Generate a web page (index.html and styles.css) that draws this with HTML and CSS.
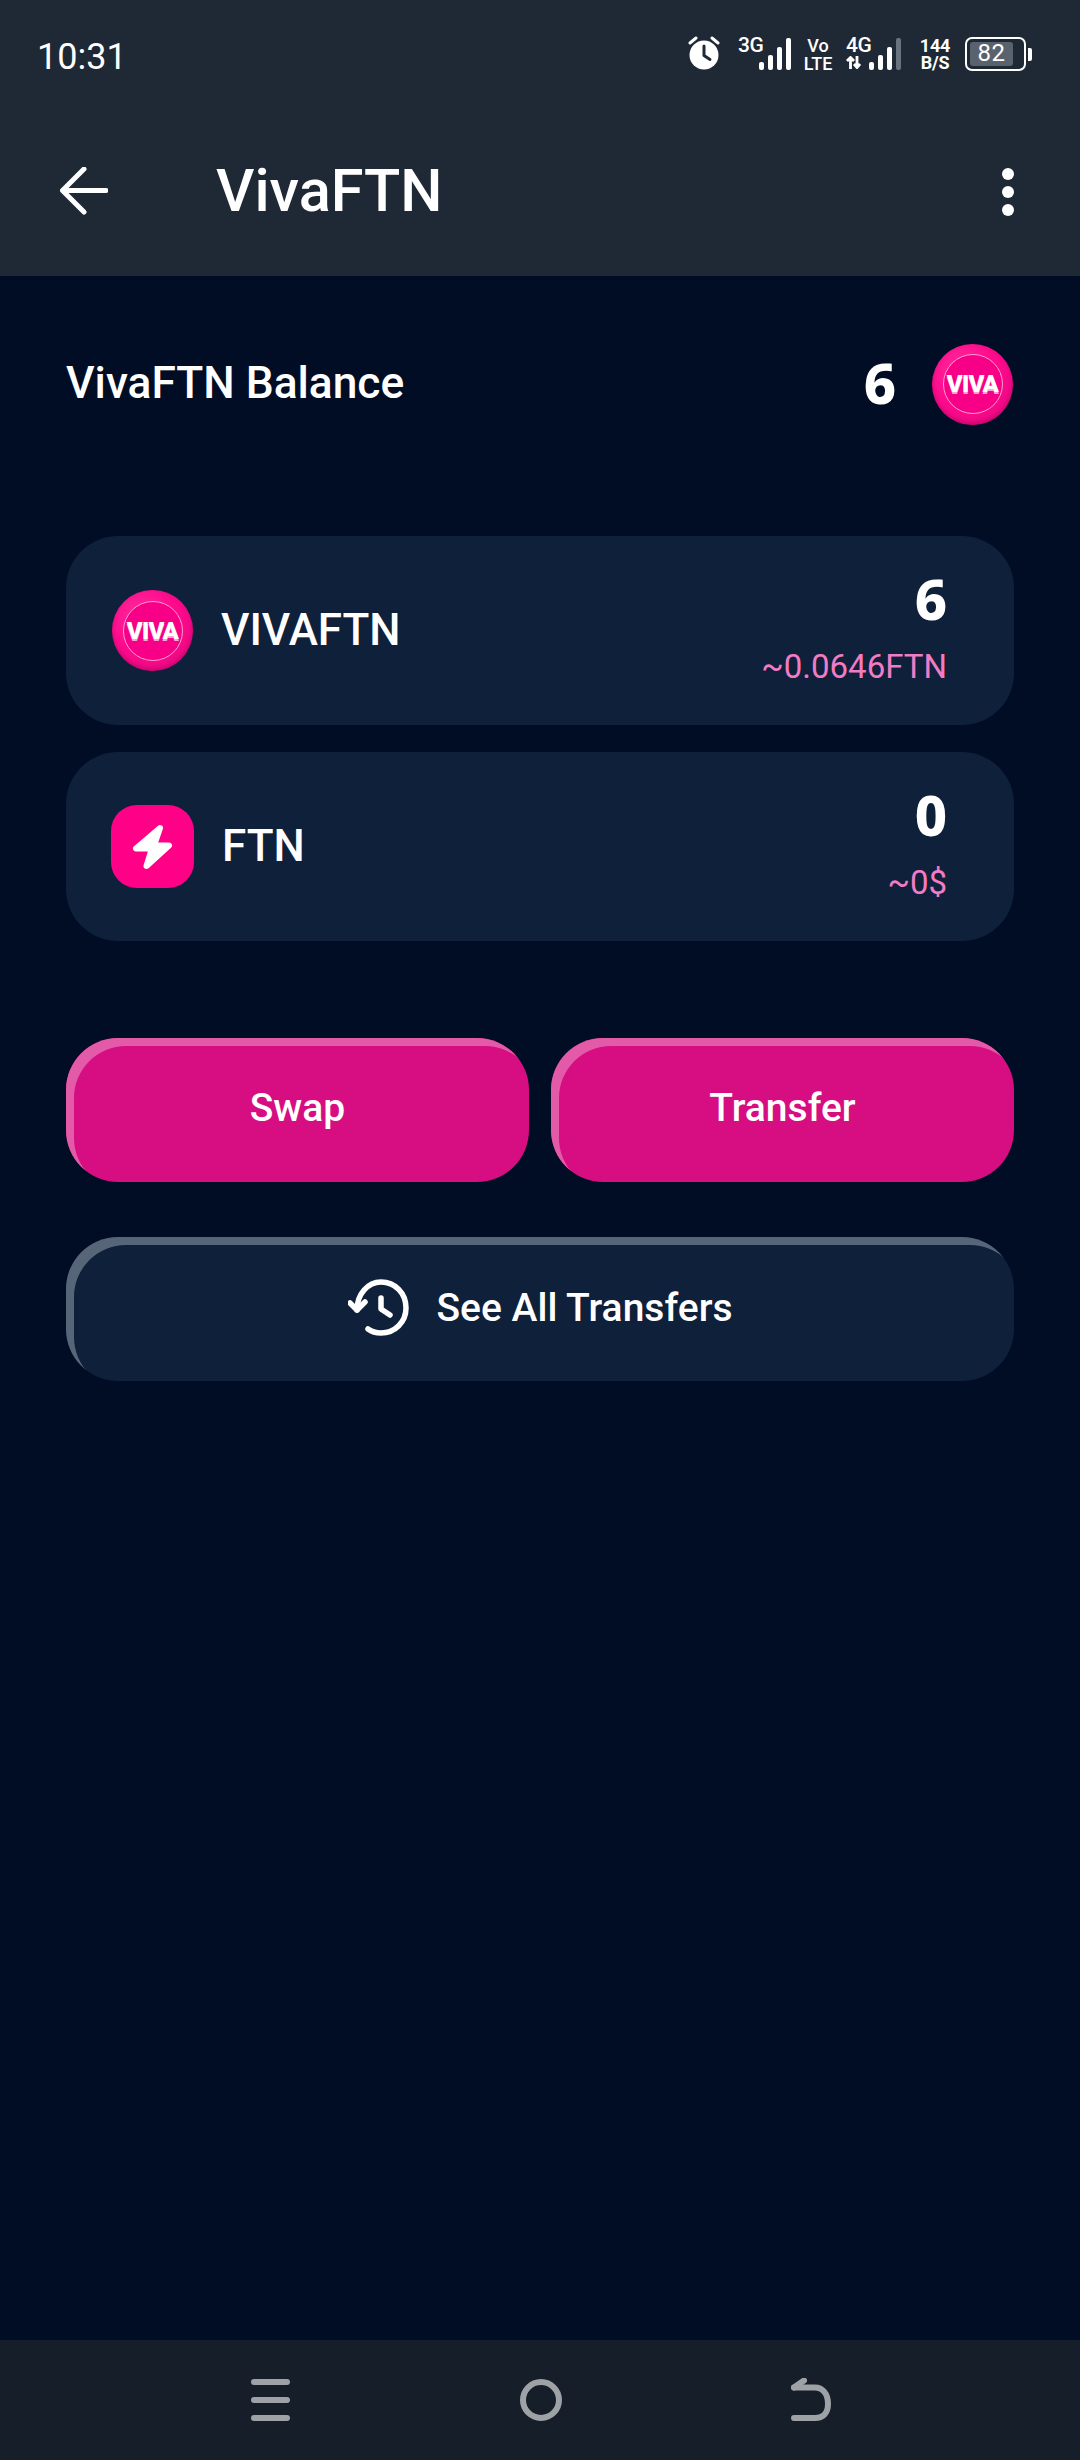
FILE: index.html
```html
<!DOCTYPE html>
<html lang="en">
<head>
<meta charset="utf-8">
<title>VivaFTN</title>
<link rel="stylesheet" href="styles.css">
</head>
<body>
<div class="screen">
  <header class="top">
    <div class="status">
      <span class="time">10:31</span>
      <div class="status-right">
        <svg class="alarm" width="32" height="34" viewBox="0 0 32 34"><circle cx="16" cy="19" r="14.5" fill="#fff"/><path d="M16 10v9.500l6 4" fill="none" stroke="#1e2935" stroke-width="3" stroke-linecap="round" stroke-linejoin="round"/><path d="M2 7l6-5M30 7l-6-5" fill="none" stroke="#fff" stroke-width="3" stroke-linecap="round"/></svg>
        <div class="sig sig-3g">
          <span class="net">3G</span>
          <div class="bars"><i class="b1"></i><i class="b2"></i><i class="b3"></i><i class="b4"></i></div>
        </div>
        <div class="two vo"><span>Vo</span><span>LTE</span></div>
        <div class="sig sig-4g">
          <div class="two-net"><span class="net">4G</span>
            <svg class="updown" width="15" height="13" viewBox="0 0 15 13"><path d="M4.500 13V2M1 5L4.500 1.500 8 5" fill="none" stroke="#fff" stroke-width="2.800"/><path d="M11 0v11M8 8L11 11.500 14 8" fill="none" stroke="#fff" stroke-width="2.800"/></svg>
          </div>
          <div class="bars"><i class="b1"></i><i class="b2"></i><i class="b3"></i><i class="b4 off"></i></div>
        </div>
        <div class="two speed"><span>144</span><span>B/S</span></div>
        <div class="battery"><div class="batt-body"><div class="batt-fill">82</div></div><i class="nub"></i></div>
      </div>
    </div>
    <div class="appbar">
      <svg class="back" width="48" height="48" viewBox="0 0 48 48"><path d="M46 23.500H3M24 2L2.500 23.500 24 45" fill="none" stroke="#fff" stroke-width="5" stroke-linecap="round" stroke-linejoin="round"/></svg>
      <h1 class="title">VivaFTN</h1>
      <div class="dots"><i></i><i></i><i></i></div>
    </div>
  </header>

  <main class="content">
    <section class="balance">
      <span class="balance-label">VivaFTN Balance</span>
      <div class="balance-right">
        <span class="num">6</span>
        <div class="coin"><div class="coin-ring"><span class="coin-text">VIVA</span></div></div>
      </div>
    </section>

    <section class="cards">
      <article class="card">
        <div class="coin"><div class="coin-ring"><span class="coin-text">VIVA</span></div></div>
        <span class="card-name">VIVAFTN</span>
        <div class="card-vals"><span class="num">6</span><span class="sub">~0.0646FTN</span></div>
      </article>
      <article class="card">
        <div class="ftn"><svg width="83" height="83" viewBox="0 0 83 83"><path d="M49 23L25 43.500H41L35.500 61L58 40.500H43Z" fill="#fff" stroke="#fff" stroke-width="6" stroke-linejoin="round"/></svg></div>
        <span class="card-name">FTN</span>
        <div class="card-vals"><span class="num">0</span><span class="sub">~0$</span></div>
      </article>
    </section>

    <section class="actions">
      <button class="btn pink">Swap</button>
      <button class="btn pink">Transfer</button>
    </section>

    <button class="btn navy">
      <svg class="hist" width="62" height="58" viewBox="0 0 62 58"><path d="M9 31C9 15 20 3 33 3C47 3 58 14 58 29C58 43 47 54 33 54C28 54 24 53 20 50" fill="none" stroke="#fff" stroke-width="5.500" stroke-linecap="round"/><path d="M2 24L9 31L17 23" fill="none" stroke="#fff" stroke-width="5.500" stroke-linecap="round" stroke-linejoin="round"/><path d="M33 19V30L42 36" fill="none" stroke="#fff" stroke-width="5.500" stroke-linecap="round" stroke-linejoin="round"/></svg>
      <span>See All Transfers</span>
    </button>
  </main>

  <nav class="navbar">
    <div class="nav-menu"><i></i><i></i><i></i></div>
    <div class="nav-home"></div>
    <svg class="nav-back" width="40" height="44" viewBox="0 0 40 44"><path d="M3 9.500H24C31 9.500 37 15 37 26C37 35 32 40 24 40H3" fill="none" stroke="#9ea2a7" stroke-width="6" stroke-linecap="round"/><path d="M13 2.500L3 9.500" fill="none" stroke="#9ea2a7" stroke-width="6" stroke-linecap="round"/></svg>
  </nav>
</div>
</body>
</html>
```
FILE: styles.css
```css
* { box-sizing: border-box; margin: 0; padding: 0; }
html, body { width: 1080px; height: 2460px; overflow: hidden; }
body { background: #000d25; color: #fff; font-family: Roboto, "Noto Sans", sans-serif; }
.screen { width: 1080px; height: 2460px; display: flex; flex-direction: column; }

.top { height: 276px; background: #1e2935; flex: none; }
.status { height: 106px; display: flex; align-items: flex-start; justify-content: space-between; padding: 37px 0 0 37px; }
.time { font-size: 36px; line-height: 40px; font-weight: 400; }
.status-right { display: flex; align-items: flex-start; padding: 0 48px 0 0; height: 34px; }
.alarm { display: block; margin-right: 18px; margin-top: -1px; }
.sig { display: flex; height: 33px; }
.net { font-size: 21px; line-height: 16px; font-weight: 500; display: block; letter-spacing: -.5px; }
.bars { display: flex; align-items: flex-end; gap: 4px; height: 33px; }
.bars i { display: block; width: 5px; background: #fff; border-radius: 2px; }
.bars .b1 { height: 8px; }
.bars .b2 { height: 15px; }
.bars .b3 { height: 23px; }
.bars .b4 { height: 32px; }
.bars .off { background: #6a727d; }
.sig-3g { width: 53px; margin-right: 12px; }
.sig-3g .net { width: 25px; flex: none; }
.sig-3g .bars { margin-left: -4px; }
.two { display: flex; flex-direction: column; align-items: center; font-weight: 500; font-size: 18px; line-height: 18px; }
.vo { width: 30px; margin-right: 13px; }
.two-net { width: 24px; display: flex; flex-direction: column; gap: 3px; }
.updown { display: block; }
.sig-4g { width: 54px; margin-right: 20px; }
.sig-4g .bars { margin-left: -1px; }
.speed { width: 30px; font-size: 18px; line-height: 17px; margin-right: 15px; font-weight: 700; letter-spacing: -.2px; }
.battery { display: flex; align-items: center; }
.batt-body { width: 61px; height: 34px; border: 2.5px solid #fff; border-radius: 7px; padding: 3px 11px 3px 3px; }
.batt-fill { height: 100%; background: #5a6270; border-radius: 3px; font-size: 24px; line-height: 23px; text-align: center; font-weight: 400; letter-spacing: .5px; }
.nub { display: block; width: 4px; height: 13px; background: #fff; margin-left: 2px; border-radius: 0 2px 2px 0; }

.appbar { height: 170px; display: flex; align-items: center; padding: 0 66px 0 60px; }
.back { display: block; }
.title { font-size: 59.5px; font-weight: 500; line-height: 66px; margin-left: 108px; flex: 1; }
.dots { display: flex; flex-direction: column; gap: 6px; margin-top: 2px; }
.dots i { display: block; width: 12px; height: 12px; background: #fff; border-radius: 50%; }

.content { flex: 1; padding: 67px 66px 0; display: flex; flex-direction: column; }
.balance { height: 82px; display: flex; align-items: center; justify-content: space-between; }
.balance-label { font-size: 44.3px; font-weight: 500; margin-top: -3px; }
.balance-right { display: flex; align-items: center; gap: 36px; }
.balance-right .num { margin-top: -4px; }
.balance-right .coin { margin-right: 1px; }
.num { font-family: "Noto Sans", Roboto, sans-serif; font-weight: 800; font-size: 56px; line-height: 64px; }

.coin { width: 81px; height: 81px; border-radius: 50%; flex: none; display: flex; align-items: center; justify-content: center;
  background: radial-gradient(circle at 35% 30%, #ff2a9c 0%, #ff0a8c 45%, #e2087f 100%); box-shadow: inset 0 -2px 4px rgba(140, 0, 80, .45); }
.coin-ring { width: 60px; height: 60px; border-radius: 50%; border: 1.500px solid #ff9fd2; display: flex; align-items: center; justify-content: center; background: #f70087; }
.coin-text { font-size: 24px; line-height: 24px; font-weight: 900; letter-spacing: -.8px; color: #fff; text-shadow: 0 2px 0 #f7a6d4; }

.cards { margin-top: 111px; display: flex; flex-direction: column; gap: 27px; }
.card { height: 189px; background: #0f203b; border-radius: 52px; display: flex; align-items: center; padding: 0 67px 0 46px; }
.card-name { font-size: 44px; font-weight: 500; margin-left: 28px; flex: 1; margin-top: -2px; }
.card-vals { display: flex; flex-direction: column; align-items: flex-end; padding-bottom: 9px; }
.sub { font-size: 33px; line-height: 40px; color: #f27cc4; margin-top: 17px; }
.ftn { width: 83px; height: 83px; margin-left: -1px; border-radius: 26px; background: #ff0087; flex: none; }
.ftn svg { display: block; }

.actions { margin-top: 97px; display: flex; gap: 22px; }
.btn { border: 0; font-family: Roboto, sans-serif; color: #fff; font-size: 39px; font-weight: 500; height: 144px; border-radius: 52px; display: flex; align-items: center; justify-content: center; padding-bottom: 4px; }
.pink { flex: 1; background: #d60e82; box-shadow: inset 8px 8px 0 #e35ba8; }
.navy { margin-top: 55px; width: 100%; background: #0f203b; box-shadow: inset 8px 8px 0 #576579; gap: 27px; padding-bottom: 2px; }
.hist { display: block; }

.navbar { height: 120px; flex: none; background: #161f29; display: flex; align-items: center; justify-content: space-between; padding: 0 249px 0 251px; }
.nav-menu { width: 39px; display: flex; flex-direction: column; gap: 12px; }
.nav-menu i { display: block; height: 6px; background: #9ea2a7; border-radius: 3px; }
.nav-home { width: 42px; height: 42px; border: 6px solid #9ea2a7; border-radius: 50%; }
.nav-back { display: block; }
```
